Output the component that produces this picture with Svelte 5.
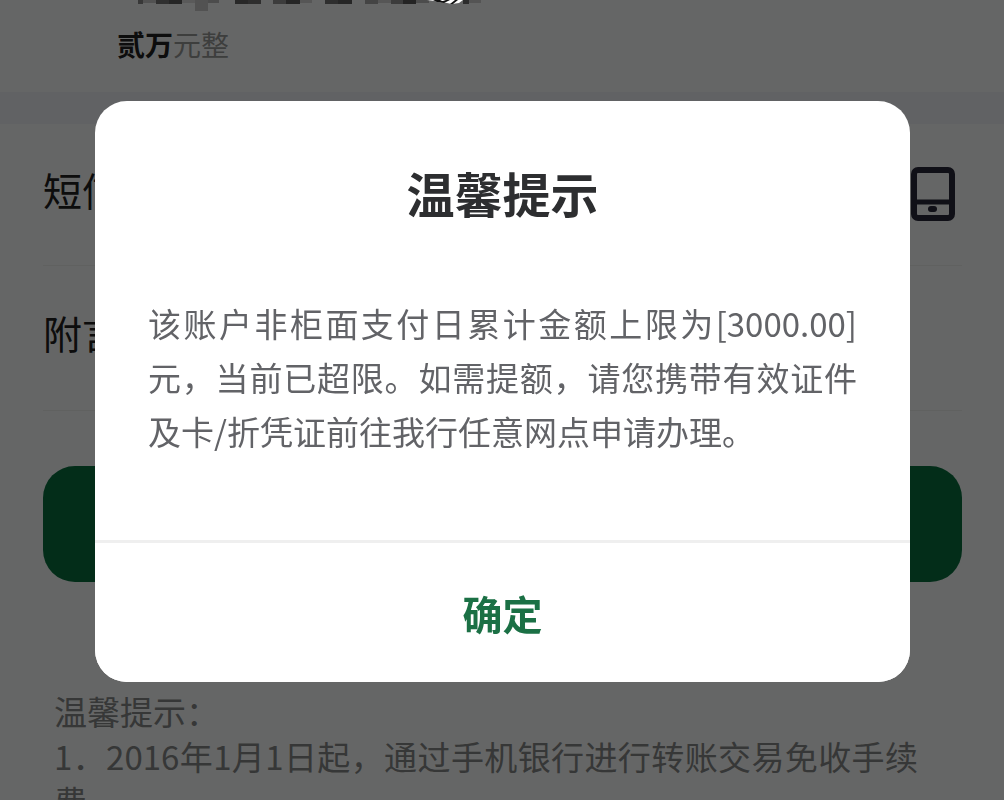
<script>
  const fields = ['短信通知', '附言'];

  // [x, y, width, height, grey level] of each block of the masked name
  const mosaic = [
    [1, 0, 5, 4, 140], [6, 0, 13, 3, 205], [19, 0, 13, 4, 120], [32, 0, 13, 4, 95],
    [45, 0, 13, 3, 225], [58, 0, 13, 11, 205], [71, 0, 11, 3, 190], [98, 0, 13, 4, 100],
    [111, 0, 13, 4, 115], [136, 0, 13, 4, 150], [149, 0, 14, 4, 95], [163, 0, 12, 3, 215],
    [188, 0, 13, 4, 115], [201, 0, 14, 4, 95], [228, 0, 13, 4, 170], [241, 0, 13, 3, 215],
    [254, 0, 12, 4, 150], [266, 0, 13, 4, 90], [279, 0, 13, 3, 190], [326, 0, 6, 4, 110],
    [332, 0, 12, 3, 210]
  ];

  let open = $state(true);
</script>

<main class="page">
  <section class="amount">
    <svg class="mosaic" width="346" height="12" viewBox="0 0 346 12" aria-hidden="true">
      {#each mosaic as [x, y, w, h, g]}
        <rect {x} {y} width={w} height={h} fill={`rgb(${g},${g},${g})`} />
      {/each}
    </svg>
    <p><strong>贰万</strong>元整</p>
  </section>

  <section class="fields">
    {#each fields as field, i}
      <div class="field">
        <span>{field}</span>
        {#if i === 0}
          <svg width="44" height="56" viewBox="0 0 44 56" fill="none" aria-hidden="true">
            <rect x="3" y="3" width="38" height="48" rx="4" stroke="#28283a" stroke-width="6" />
            <path d="M3 35h38" stroke="#28283a" stroke-width="5" />
            <rect x="17" y="39" width="9" height="6" rx="3" fill="#28283a" />
          </svg>
        {/if}
      </div>
    {/each}
  </section>

  <button class="submit" type="button" aria-label="确定"></button>

  <section class="tips">
    <p>温馨提示：</p>
    <p>1．2016年1月1日起，通过手机银行进行转账交易免收手续费</p>
  </section>
</main>

{#if open}
  <div class="scrim">
    <div class="dialog" role="dialog" aria-modal="true" aria-labelledby="title">
      <div class="content">
        <h1 id="title">温馨提示</h1>
        <p>该账户非柜面支付日累计金额上限为[3000.00]元，当前已超限。如需提额，请您携带有效证件及卡/折凭证前往我行任意网点申请办理。</p>
      </div>
      <button class="confirm" type="button" onclick={() => (open = false)}>确定</button>
    </div>
  </div>
{/if}

<svg class="scribble" width="42" height="5" viewBox="0 0 42 5" aria-hidden="true">
  <path d="M2 0H38L34 3L27 4L17 2Z" fill="#fff" />
  <path d="M8 0h7l4 2-7 0zM21 0h4l-6 3-4-1zM30 0h3l-5 4h-3z" fill="#111" />
</svg>

<style>
  :global(body) {
    margin: 0;
    background: #fdfffe;
  }
  p, h1 {
    margin: 0;
  }
  .page, .dialog, .dialog button {
    font-family: "Noto Sans CJK SC", "Noto Sans", sans-serif;
  }
  .page {
    height: 100vh;
    overflow: hidden;
    background: #fdfffe;
  }
  .amount {
    padding-bottom: 28px;
    border-bottom: 32px solid #f3f5fa;
    color: #999b9a;
    font-size: 28px;
    line-height: 40px;
  }
  .amount p {
    padding: 12px 117px 0;
  }
  .amount strong {
    color: #222;
  }
  .mosaic {
    display: block;
    margin-left: 137px;
  }
  .fields {
    margin: 0 42px 0 43px;
  }
  .field {
    display: flex;
    align-items: center;
    justify-content: space-between;
    height: 144px;
    padding-right: 7px;
    border-bottom: 1px solid #f0f2f1;
    color: #222;
    font-size: 39px;
    line-height: 56px;
  }
  .field:first-child {
    height: 141px;
  }
  .field span {
    padding-bottom: 12px;
  }
  .submit {
    display: block;
    width: calc(100% - 85px);
    height: 116px;
    margin: 55px 42px 0 43px;
    border: 0;
    border-radius: 32px;
    background: #087040;
  }
  .tips {
    padding: 107px 86px 0 54px;
    color: #888a89;
    font-size: 33px;
    line-height: 45px;
    text-align: justify;
  }
  .scrim {
    position: fixed;
    inset: 0;
    display: grid;
    align-content: start;
    padding: 101px 94px 0 95px;
    background: rgb(0 0 0 / 60%);
  }
  .dialog {
    overflow: hidden;
    border-radius: 32px;
    background: #fff;
  }
  .content {
    padding: 55px 53px 82px;
    border-bottom: 3px solid #efefef;
  }
  h1 {
    color: #2d2e30;
    font-size: 48px;
    font-weight: 700;
    line-height: 72px;
    text-align: center;
  }
  .content p {
    margin-top: 68px;
    color: #626367;
    font-size: 33px;
    line-height: 54px;
    text-align: justify;
  }
  .confirm {
    display: block;
    width: 100%;
    height: 139px;
    padding: 0;
    border: 0;
    background: #fff;
    color: #1b7045;
    font-size: 40px;
    font-weight: 700;
  }
  .scribble {
    position: absolute;
    top: 0;
    left: 425px;
  }
</style>
